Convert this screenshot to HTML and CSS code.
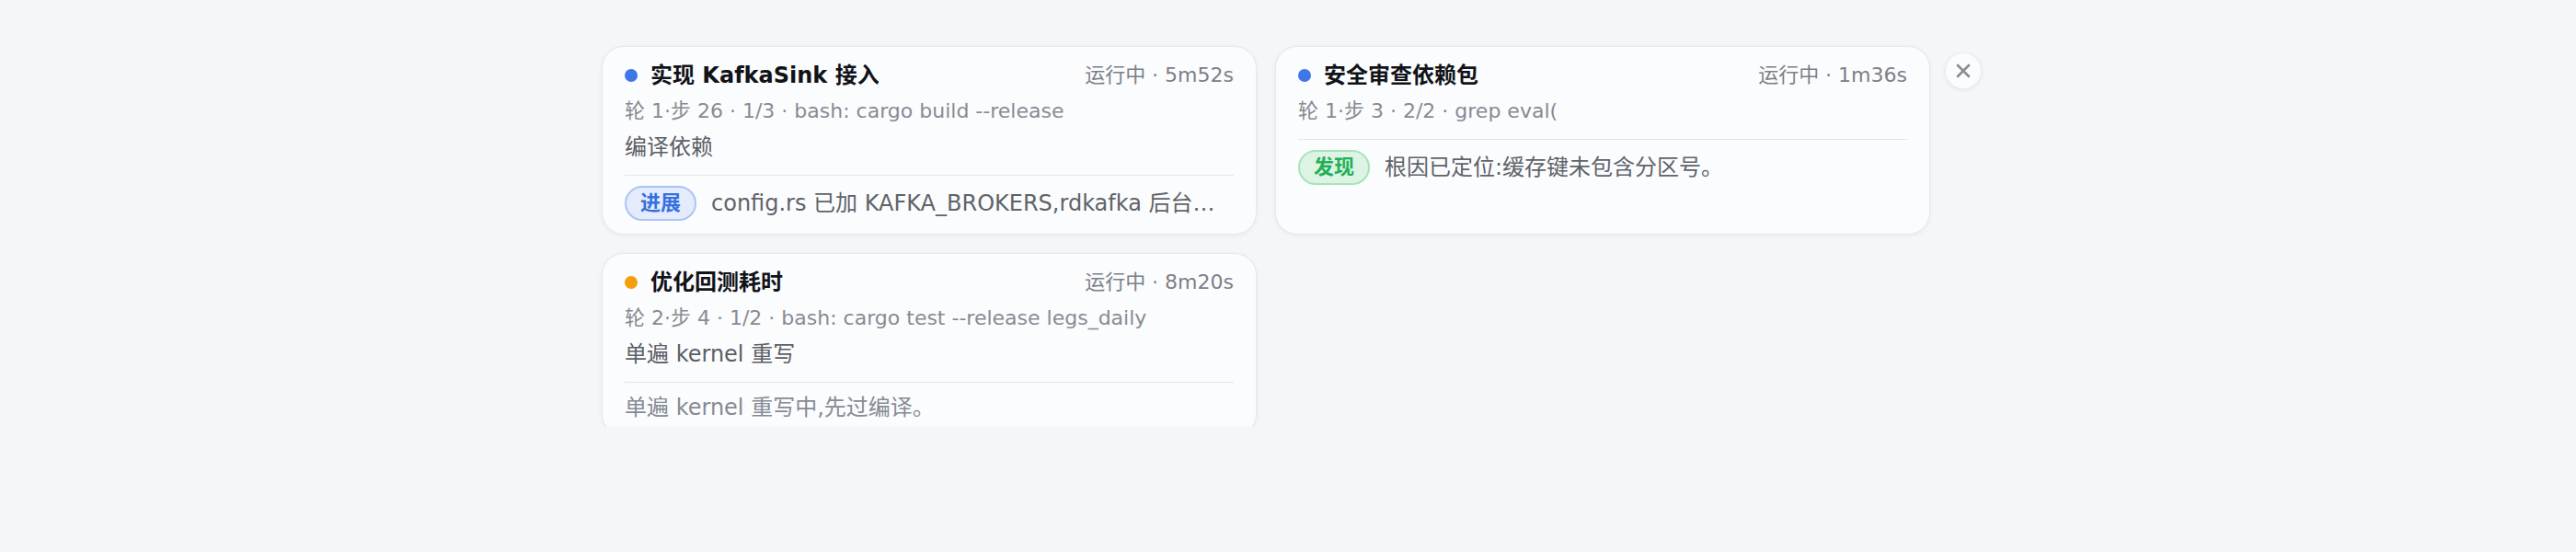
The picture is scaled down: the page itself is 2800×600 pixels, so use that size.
FILE: index.html
```html
<!DOCTYPE html>
<html lang="zh">
<head>
<meta charset="utf-8">
<title>Agents</title>
<link rel="stylesheet" href="styles.css">
</head>
<body>
<div class="dock">
  <div class="grid">
    <div class="card">
      <div class="head">
        <span class="dot dot-blue"></span>
        <span class="title">实现 KafkaSink 接入</span>
        <span class="status">运行中 · 5m52s</span>
      </div>
      <div class="meta">轮 1·步 26 · 1/3 · bash: cargo build --release</div>
      <div class="desc">编译依赖</div>
      <div class="divider"></div>
      <div class="note">
        <span class="badge badge-blue">进展</span>
        <span class="note-text">config.rs 已加 KAFKA_BROKERS,rdkafka 后台线程发送中。</span>
      </div>
    </div>
    <div class="card">
      <div class="head">
        <span class="dot dot-blue"></span>
        <span class="title">安全审查依赖包</span>
        <span class="status">运行中 · 1m36s</span>
      </div>
      <div class="meta">轮 1·步 3 · 2/2 · grep eval(</div>
      <div class="divider"></div>
      <div class="note">
        <span class="badge badge-green">发现</span>
        <span class="note-text">根因已定位:缓存键未包含分区号。</span>
      </div>
    </div>
    <div class="card">
      <div class="head">
        <span class="dot dot-orange"></span>
        <span class="title">优化回测耗时</span>
        <span class="status">运行中 · 8m20s</span>
      </div>
      <div class="meta">轮 2·步 4 · 1/2 · bash: cargo test --release legs_daily</div>
      <div class="desc">单遍 kernel 重写</div>
      <div class="divider"></div>
      <div class="note">
        <span class="note-text note-muted">单遍 kernel 重写中,先过编译。</span>
      </div>
    </div>
  </div>
  <button class="close" aria-label="关闭">
    <svg width="16" height="16" viewBox="0 0 16 16"><path d="M2 2 L14 14 M14 2 L2 14" stroke="#8a8d93" stroke-width="2.6" stroke-linecap="round" fill="none"/></svg>
  </button>
</div>
</body>
</html>
```

FILE: styles.css
```css
html, body {
  margin: 0;
  padding: 0;
  background: #f5f6f9;
  font-family: "DejaVu Sans", "Noto Sans CJK SC", sans-serif;
}

.dock {
  height: 464px;
  box-sizing: border-box;
  overflow: hidden;
  display: flex;
  justify-content: center;
  align-items: flex-start;
  gap: 16px;
  padding: 50px 0 0 8px;
}

.grid {
  display: grid;
  grid-template-columns: 712px 712px;
  column-gap: 20px;
  row-gap: 20px;
}

.card {
  box-sizing: border-box;
  background: #fbfcfe;
  border: 1px solid #e6e8ec;
  border-radius: 24px;
  box-shadow: 0 1px 5px rgba(20, 30, 60, 0.06);
  padding: 17px 24px 14px 24px;
  display: flex;
  flex-direction: column;
  min-width: 0;
}

.head {
  display: flex;
  align-items: center;
  height: 28px;
}

.dot {
  width: 14px;
  height: 14px;
  border-radius: 50%;
  margin-right: 14px;
  flex: none;
}
.dot-blue { background: #3f76e8; }
.dot-orange { background: #f59e0b; }

.title {
  flex: 1;
  font-size: 24px;
  line-height: 28px;
  font-weight: bold;
  color: #111318;
  white-space: nowrap;
}

.status {
  font-size: 22px;
  line-height: 28px;
  color: #7c8088;
  white-space: nowrap;
}

.meta {
  margin-top: 12px;
  font-size: 22px;
  line-height: 26px;
  color: #878b93;
  white-space: nowrap;
}

.desc {
  margin-top: 13px;
  font-size: 24px;
  line-height: 26px;
  color: #5b5f66;
}

.divider {
  margin-top: 17px;
  height: 1px;
  background: #e4e6ea;
}

.note {
  margin-top: 11px;
  display: flex;
  align-items: center;
  gap: 16px;
  min-width: 0;
}

.badge {
  flex: none;
  box-sizing: border-box;
  height: 38px;
  padding: 0 15px;
  border: 2px solid;
  border-radius: 19px;
  font-size: 22px;
  line-height: 34px;
  font-weight: bold;
}
.badge-blue {
  background: #e3ebfc;
  border-color: #abc4f3;
  color: #3570e0;
}
.badge-green {
  background: #ddf4e5;
  border-color: #a8e2bb;
  color: #22b057;
}

.note-text {
  flex: 1;
  min-width: 0;
  font-size: 24px;
  line-height: 32px;
  color: #5f6369;
  white-space: nowrap;
  overflow: hidden;
  text-overflow: ellipsis;
}
.note-muted {
  color: #878b93;
}

.close {
  flex: none;
  margin-top: 7px;
  width: 40px;
  height: 40px;
  padding: 0;
  border: 1px solid #eceef1;
  border-radius: 50%;
  background: #fbfcfd;
  box-shadow: 0 1px 4px rgba(20, 30, 60, 0.08);
  display: flex;
  align-items: center;
  justify-content: center;
}
.close svg { display: block; }
```
